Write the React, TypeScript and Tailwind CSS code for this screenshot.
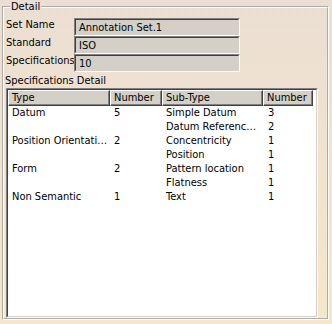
import React from "react";

const rows: [string, string, string, string][] = [
  ["Datum", "5", "Simple Datum", "3"],
  ["", "", "Datum Referenc…", "2"],
  ["Position Orientati…", "2", "Concentricity", "1"],
  ["", "", "Position", "1"],
  ["Form", "2", "Pattern location", "1"],
  ["", "", "Flatness", "1"],
  ["Non Semantic", "1", "Text", "1"],
];

function Field({ value }: { value: string }) {
  return (
    <div className="w-[166px] h-[18px] border border-t-[#808080] border-l-[#808080] border-b-white border-r-white">
      <div className="h-full border border-t-[#404040] border-l-[#404040] border-b-[#d4d0c8] border-r-[#d4d0c8] bg-[#d4d0c8] pl-[3px] leading-[15px] whitespace-nowrap">
        {value}
      </div>
    </div>
  );
}

function HeaderCell({ w, label }: { w: string; label: string }) {
  return (
    <div
      className={`${w} h-[16px] bg-[#d4d0c8] border border-t-white border-l-white border-r-[#404040] border-b-[#404040] shadow-[inset_-1px_-1px_0_#808080] pl-[3px] leading-[13px] whitespace-nowrap overflow-hidden`}
    >
      {label}
    </div>
  );
}

export default function App() {
  return (
    <div
      className="w-[332px] h-[324px] pl-[2px] text-[11px] text-black bg-gradient-to-b from-[#ebdfd3] to-[#f6e6cb]"
      style={{ fontFamily: "Tahoma, 'DejaVu Sans Condensed', 'Liberation Sans', Arial, sans-serif" }}
    >
      <fieldset className="w-[327px] h-[320px] min-w-0 border-2 [border-style:groove] border-white">
        <legend className="ml-[6px] px-[1px] leading-[14px]">Detail</legend>
        <div className="mt-[4px] flex flex-col">
          {[
            ["Set Name", "Annotation Set.1"],
            ["Standard", "ISO"],
            ["Specifications", "10"],
          ].map(([l, v]) => (
            <div key={l} className="flex h-[18px] items-start">
              <div className="w-[70px] pl-[2px] leading-[14px] whitespace-nowrap">{l}</div>
              <Field value={v} />
            </div>
          ))}
        </div>
        <div className="mt-[2px] pl-[1px] leading-[14px]">Specifications Detail</div>
        <div className="ml-[2px] w-[312px] h-[230px] border border-t-[#808080] border-l-[#808080] border-b-white border-r-white">
          <div className="h-full bg-white border border-t-[#404040] border-l-[#404040] border-b-[#d4d0c8] border-r-[#d4d0c8]">
            <div className="flex">
              <HeaderCell w="w-[102px]" label="Type" />
              <HeaderCell w="w-[52px]" label="Number" />
              <HeaderCell w="w-[101px]" label="Sub-Type" />
              <HeaderCell w="w-[50px]" label="Number" />
            </div>
            <div className="flex flex-col">
              {rows.map((r, i) => (
                <div key={i} className="flex h-[14px] leading-[14px] whitespace-nowrap">
                  <div className="w-[102px] pl-[4px]">{r[0]}</div>
                  <div className="w-[52px] pl-[4px]">{r[1]}</div>
                  <div className="w-[101px] pl-[4px]">{r[2]}</div>
                  <div className="w-[50px] pl-[5px]">{r[3]}</div>
                </div>
              ))}
            </div>
          </div>
        </div>
      </fieldset>
    </div>
  );
}
